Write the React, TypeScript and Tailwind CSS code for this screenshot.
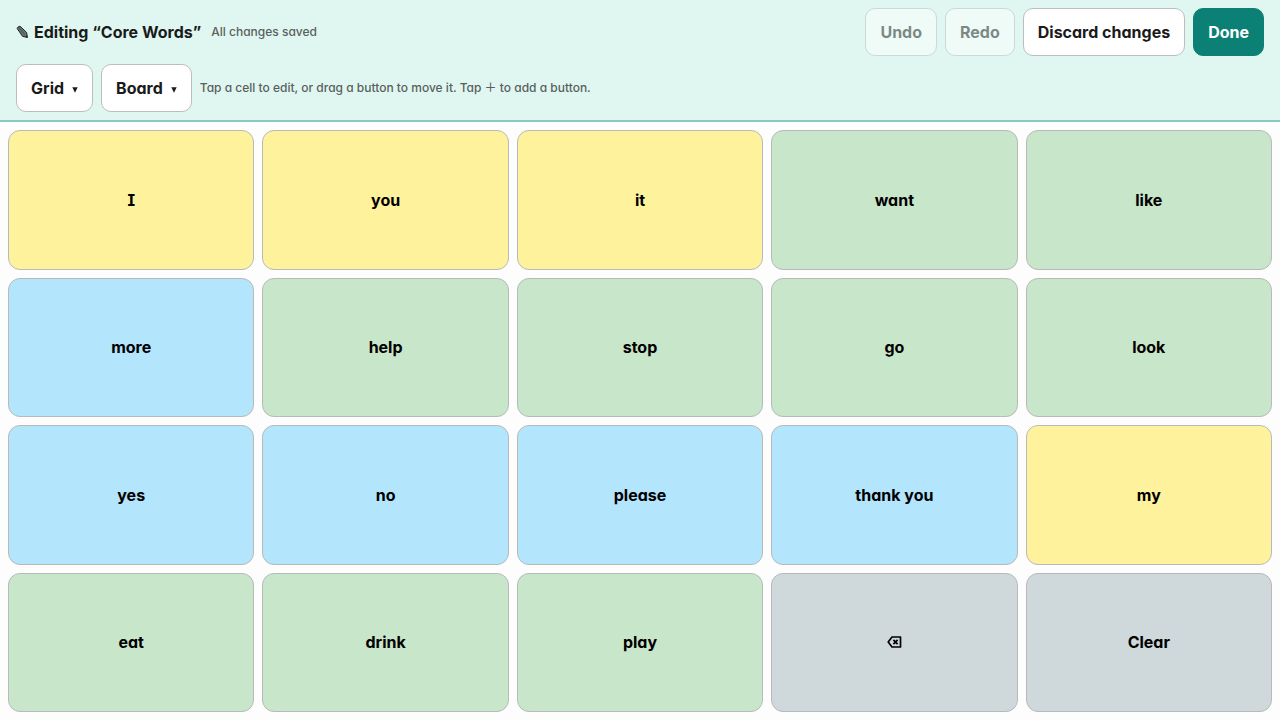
import React from "react";
import clsx from "clsx";

type Tone = "pronoun" | "verb" | "social" | "action";

type Cell = {
  label: string;
  tone: Tone;
};

const TONES: Record<Tone, string> = {
  pronoun: "bg-[#fff29d]",
  verb: "bg-[#c8e6c9]",
  social: "bg-[#b3e5fc]",
  action: "bg-[#cfd8da]",
};

const CELLS: Cell[] = [
  { label: "I", tone: "pronoun" },
  { label: "you", tone: "pronoun" },
  { label: "it", tone: "pronoun" },
  { label: "want", tone: "verb" },
  { label: "like", tone: "verb" },
  { label: "more", tone: "social" },
  { label: "help", tone: "verb" },
  { label: "stop", tone: "verb" },
  { label: "go", tone: "verb" },
  { label: "look", tone: "verb" },
  { label: "yes", tone: "social" },
  { label: "no", tone: "social" },
  { label: "please", tone: "social" },
  { label: "thank you", tone: "social" },
  { label: "my", tone: "pronoun" },
  { label: "eat", tone: "verb" },
  { label: "drink", tone: "verb" },
  { label: "play", tone: "verb" },
  { label: "Backspace", tone: "action" },
  { label: "Clear", tone: "action" },
];

const PencilIcon = () => (
  <svg width="14" height="14" viewBox="0 0 14 14" aria-hidden="true">
    <path
      d="M1.2 3.6Q1.6 1.4 4 1.2L10.6 7.4 11.4 12.4 6.6 11.4Z"
      fill="#68736f"
      stroke="#202826"
      strokeWidth="1"
      strokeLinejoin="round"
    />
    <path d="M2.6 2.4 8.8 9.4" stroke="#3c4543" strokeWidth="0.8" />
    <path d="M9.4 12 11.1 10.6 11.6 12.6Z" fill="#161d1c" />
  </svg>
);

const CaretIcon = () => (
  <svg width="6" height="6" viewBox="0 0 6 6" className="mt-1" aria-hidden="true">
    <path d="M0.3 0.3h5.4L3 5.8Z" fill="currentColor" />
  </svg>
);

const BackspaceIcon = () => (
  <svg width="15" height="12" viewBox="0 0 15 12" fill="none" stroke="currentColor" aria-hidden="true">
    <path d="M5 1H13.5V11H5L1.2 6Z" strokeWidth="1.7" strokeLinejoin="round" />
    <path d="M6.4 3.9 10.6 8.1M10.6 3.9 6.4 8.1" strokeWidth="1.8" />
  </svg>
);

type ToolButtonProps = React.ButtonHTMLAttributes<HTMLButtonElement> & {
  primary?: boolean;
};

const ToolButton = ({ primary, className, ...props }: ToolButtonProps) => (
  <button
    type="button"
    className={clsx(
      "flex h-12 items-center justify-center gap-2 rounded-[10px] border px-3.5 text-base font-bold disabled:opacity-50",
      primary
        ? "border-[#0b8074] bg-[#0b8074] text-white"
        : "border-[#bdbdbd] bg-white text-[#1a1a1a]",
      className
    )}
    {...props}
  />
);

const Toolbar = () => (
  <header className="flex flex-col gap-2 border-b-2 border-[#85cbc1] bg-[#dff7f0] px-4 py-2">
    <div className="flex items-center gap-2.5">
      <h1 className="flex items-center gap-1 text-base font-bold text-[#1a1a1a]">
        <PencilIcon />
        Editing “Core Words”
      </h1>
      <p className="text-xs font-medium text-[#5a5f5e]">All changes saved</p>
      <div className="ml-auto flex gap-2">
        <ToolButton disabled>Undo</ToolButton>
        <ToolButton disabled>Redo</ToolButton>
        <ToolButton>Discard changes</ToolButton>
        <ToolButton primary>Done</ToolButton>
      </div>
    </div>

    <div className="flex items-center gap-2">
      <ToolButton aria-haspopup="menu">
        Grid <CaretIcon />
      </ToolButton>
      <ToolButton aria-haspopup="menu">
        Board <CaretIcon />
      </ToolButton>
      <p className="text-xs font-medium text-[#5a5f5e]">
        Tap a cell to edit, or drag a button to move it. Tap ＋ to add a button.
      </p>
    </div>
  </header>
);

export default function App() {
  // cv08 and cv11 give the serifed I and the single-storey a, easier to tell apart
  return (
    <div className="flex min-h-screen flex-col bg-[#fdfdfd] font-['Inter','Noto_Sans_CJK_JP',sans-serif] [font-feature-settings:'cv08','cv11']">
      <Toolbar />
      <main className="grid flex-1 auto-rows-fr grid-cols-5 gap-2 p-2">
        {CELLS.map(({ label, tone }) => (
          <button
            key={label}
            type="button"
            aria-label={label}
            className={clsx(
              "flex items-center justify-center rounded-xl border border-[#b9b9b9] text-base font-bold text-black",
              TONES[tone]
            )}
          >
            {label === "Backspace" ? <BackspaceIcon /> : label}
          </button>
        ))}
      </main>
    </div>
  );
}
